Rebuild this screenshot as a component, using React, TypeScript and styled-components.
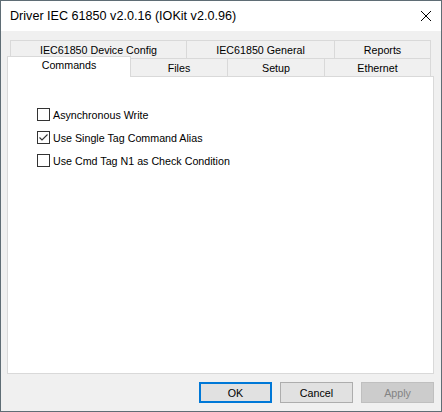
import React from "react";
import styled, { createGlobalStyle } from "styled-components";

const GlobalStyle = createGlobalStyle`
  html, body {
    margin: 0;
    padding: 0;
    background: #f0f0f0;
  }
  * {
    box-sizing: border-box;
  }
`;

const Window = styled.div`
  width: 442px;
  height: 412px;
  border: 1px solid #5f6d75;
  background: #f0f0f0;
  display: flex;
  flex-flow: column nowrap;
  font-family: "Liberation Sans", Arial, sans-serif;
  font-size: 10.7px;
  color: #000;
`;

const TitleBar = styled.div`
  height: 30px;
  flex: none;
  background: #fff;
  display: flex;
  align-items: center;
  justify-content: space-between;
  padding-left: 9px;
  font-size: 12.6px;
`;

const CloseButton = styled.div`
  width: 30px;
  height: 30px;
  display: flex;
  align-items: center;
  justify-content: center;
`;

const Body = styled.div`
  flex: 1;
  display: flex;
  flex-flow: column nowrap;
  padding: 9px 7px 8px 6px;
`;

const TabRow = styled.div<{ $inset: number }>`
  display: flex;
  align-items: flex-end;
  height: 18px;
  padding-left: ${(p) => p.$inset}px;
`;

const Tab = styled.div<{ $width: number }>`
  width: ${(p) => p.$width}px;
  height: 18px;
  margin-left: -1px;
  border: 1px solid #d9d9d9;
  border-bottom: none;
  background: #f0f0f0;
  display: flex;
  align-items: center;
  justify-content: center;
  padding-top: 1px;
  &:first-child {
    margin-left: 0;
  }
`;

const ActiveTab = styled(Tab)`
  height: 21px;
  margin-bottom: -1px;
  background: #fff;
  position: relative;
  z-index: 1;
  align-items: flex-start;
  padding-top: 2px;
`;

const Panel = styled.div`
  flex: 1;
  background: #fff;
  border: 1px solid #d9d9d9;
  display: flex;
  flex-flow: column nowrap;
  gap: 10px;
  padding: 31px 0 0 29px;
`;

const CheckRow = styled.label`
  display: flex;
  align-items: center;
  height: 13px;
  gap: 3px;
`;

const Box = styled.span`
  width: 13px;
  height: 13px;
  border: 1px solid #333;
  background: #fff;
  display: flex;
  align-items: center;
  justify-content: center;
`;

const ButtonRow = styled.div`
  display: flex;
  justify-content: flex-end;
  gap: 8px;
  margin-top: 8px;
`;

const Button = styled.div<{ $primary?: boolean; $disabled?: boolean }>`
  width: 73px;
  height: 21px;
  display: flex;
  align-items: center;
  justify-content: center;
  background: ${(p) => (p.$disabled ? "#cccccc" : "#e1e1e1")};
  border: ${(p) =>
    p.$primary ? "2px solid #0078d7" : p.$disabled ? "1px solid #bfbfbf" : "1px solid #adadad"};
  color: ${(p) => (p.$disabled ? "#838383" : "#000")};
`;

const Check = ({ checked, label }: { checked?: boolean; label: string }) => (
  <CheckRow>
    <Box>
      {checked && (
        <svg width="11" height="11" viewBox="0 0 11 11">
          <path d="M1.5 5.5 L4 8 L9.5 2.5" fill="none" stroke="#333" strokeWidth="1.1" />
        </svg>
      )}
    </Box>
    {label}
  </CheckRow>
);

const App = () => {
  return (
    <>
      <GlobalStyle />
      <Window>
        <TitleBar>
          Driver IEC 61850 v2.0.16 (IOKit v2.0.96)
          <CloseButton>
            <svg width="10" height="10" viewBox="0 0 10 10">
              <path d="M0 0 L10 10 M10 0 L0 10" stroke="#000" strokeWidth="1" />
            </svg>
          </CloseButton>
        </TitleBar>
        <Body>
          <TabRow $inset={3}>
            <Tab $width={177}>IEC61850 Device Config</Tab>
            <Tab $width={149}>IEC61850 General</Tab>
            <Tab $width={97}>Reports</Tab>
          </TabRow>
          <TabRow $inset={0}>
            <ActiveTab $width={124}>Commands</ActiveTab>
            <Tab $width={98}>Files</Tab>
            <Tab $width={98}>Setup</Tab>
            <Tab $width={107}>Ethernet</Tab>
          </TabRow>
          <Panel>
            <Check label="Asynchronous Write" />
            <Check checked label="Use Single Tag Command Alias" />
            <Check label="Use Cmd Tag N1 as Check Condition" />
          </Panel>
          <ButtonRow>
            <Button $primary>OK</Button>
            <Button>Cancel</Button>
            <Button $disabled>Apply</Button>
          </ButtonRow>
        </Body>
      </Window>
    </>
  );
};

export default App;
